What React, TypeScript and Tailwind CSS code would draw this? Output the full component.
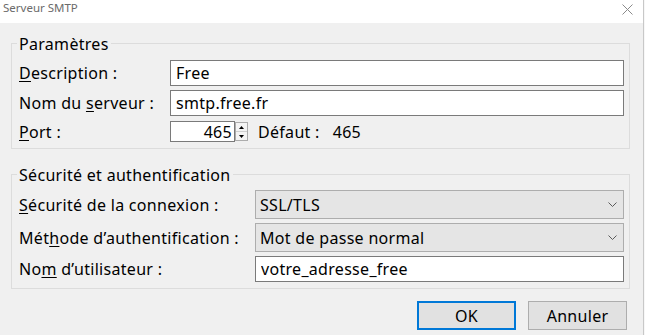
import React from 'react';

const Mnemonic = ({ text, at }: { text: string; at: number }) => (
  <>
    {text.slice(0, at)}
    <span className="underline underline-offset-2 decoration-1">{text[at]}</span>
    {text.slice(at + 1)}
  </>
);

function TextField({ value, className = '' }: { value: string; className?: string }) {
  return (
    <input
      readOnly
      defaultValue={value}
      className={`h-full border border-[#7a7a7a] bg-white px-[5px] text-black outline-none ${className}`}
    />
  );
}

function ComboBox({ value }: { value: string }) {
  return (
    <div className="flex h-full flex-1 items-center justify-between border border-[#adadad] bg-[#e5e5e5] pl-[4px] pr-[5px]">
      <span>{value}</span>
      <svg width="9" height="5" viewBox="0 0 9 5" className="mr-[1px]">
        <path d="M0.5 0.5 L4.5 4.5 L8.5 0.5" fill="none" stroke="#5a5a5a" strokeWidth="1" />
      </svg>
    </div>
  );
}

function Spinner() {
  return (
    <div className="flex h-[19px] w-[13px] flex-col border border-[#acacac] bg-[#f4f4f4]">
      <div className="flex flex-1 items-center justify-center border-b border-[#d0d0d0]">
        <svg width="5" height="3" viewBox="0 0 5 3">
          <polygon points="0,3 2.5,0 5,3" fill="#000" />
        </svg>
      </div>
      <div className="flex flex-1 items-center justify-center">
        <svg width="5" height="3" viewBox="0 0 5 3">
          <polygon points="0,0 5,0 2.5,3" fill="#000" />
        </svg>
      </div>
    </div>
  );
}

function GroupBox({ title, children }: { title: string; children: React.ReactNode }) {
  return (
    <fieldset className="w-[619px] border border-[#dcdcdc] px-[5px] pb-[6px]">
      <legend className="px-[2px] pt-[2px] pb-[1px] leading-[20px]">{title}</legend>
      {children}
    </fieldset>
  );
}

export default function App() {
  return (
    <div className="flex h-[335px] w-[645px] overflow-hidden font-['Noto_Sans','Open_Sans',sans-serif] text-[16px] tracking-[0.3px] text-black">
      <div className="flex w-[643px] flex-col bg-[#f0f0f0]">
        <div className="flex h-[23px] items-start justify-between bg-white pl-[3px] pr-[10px]">
          <span className="text-[11.5px] leading-[16px] tracking-normal text-[#6b6b6b]">Serveur SMTP</span>
          <svg width="11" height="11" viewBox="0 0 11 11" className="mt-[4px]">
            <path d="M0.5 0.5 L10.5 10.5 M10.5 0.5 L0.5 10.5" stroke="#8a8a8a" strokeWidth="1" />
          </svg>
        </div>

        <div className="flex flex-col pl-[11px]">
          <div className="mt-[9px]">
            <GroupBox title="Paramètres">
              <div className="mt-[5px] flex h-[26px] items-center">
                <label className="w-[153px] pl-[2px]">
                  <Mnemonic text="Description :" at={0} />
                </label>
                <TextField value="Free" className="flex-1" />
              </div>
              <div className="mt-[4px] flex h-[26px] items-center">
                <label className="w-[153px] pl-[2px]">
                  <Mnemonic text="Nom du serveur :" at={7} />
                </label>
                <TextField value="smtp.free.fr" className="flex-1" />
              </div>
              <div className="mt-[5px] flex h-[21px] items-center">
                <label className="w-[153px] pl-[2px]">
                  <Mnemonic text="Port :" at={0} />
                </label>
                <TextField value="465" className="w-[65px] !pr-[2px] text-right" />
                <Spinner />
                <span className="ml-[10px]">Défaut :</span>
                <span className="ml-[13px]">465</span>
              </div>
            </GroupBox>
          </div>

          <div className="mt-[14px]">
            <GroupBox title="Sécurité et authentification">
              <div className="mt-[4px] flex h-[29px] items-center">
                <label className="w-[238px] pl-[2px]">
                  <Mnemonic text="Sécurité de la connexion :" at={0} />
                </label>
                <ComboBox value="SSL/TLS" />
              </div>
              <div className="mt-[4px] flex h-[29px] items-center">
                <label className="w-[238px] pl-[2px]">
                  <Mnemonic text="Méthode d’authentification :" at={3} />
                </label>
                <ComboBox value="Mot de passe normal" />
              </div>
              <div className="mt-[4px] flex h-[26px] items-center">
                <label className="w-[238px] pl-[2px]">
                  <Mnemonic text="Nom d’utilisateur :" at={2} />
                </label>
                <TextField value="votre_adresse_free" className="flex-1" />
              </div>
            </GroupBox>
          </div>

          <div className="mt-[12px] flex w-[619px] justify-end gap-[12px] pr-[3px]">
            <button className="h-[29px] w-[99px] border-2 border-[#0078d7] bg-[#e1e1e1]">OK</button>
            <button className="h-[29px] w-[99px] border border-[#adadad] bg-[#e1e1e1]">Annuler</button>
          </div>
        </div>
      </div>
      <div className="w-px bg-[#c8c8c8]" />
      <div className="w-px bg-[#f7f7f7]" />
    </div>
  );
}
